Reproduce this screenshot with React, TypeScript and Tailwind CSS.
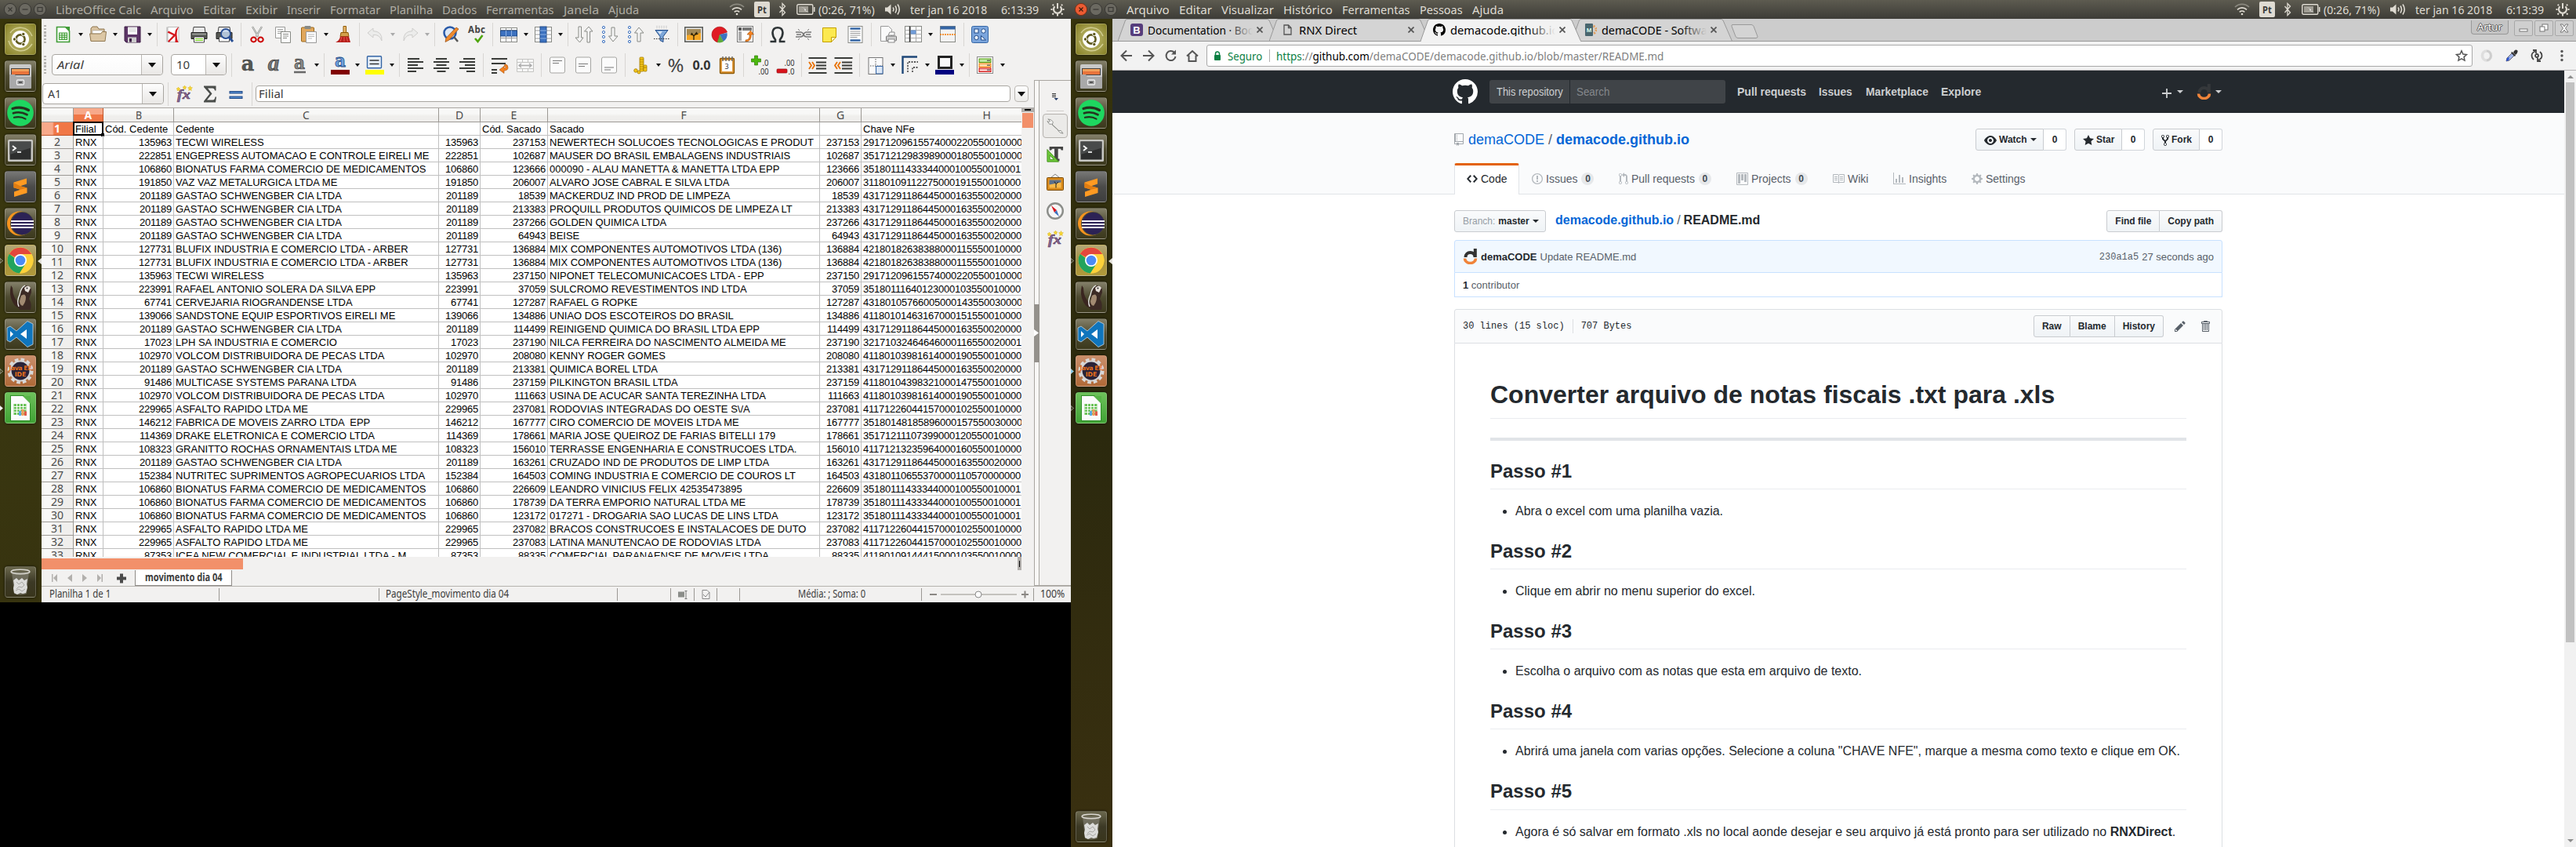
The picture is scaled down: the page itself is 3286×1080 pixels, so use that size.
import React, { useLayoutEffect, useRef } from "react";

/* Text squeezed or stretched horizontally to fill the width of its box. */
function Fit({ className, children }: { className: string; children: React.ReactNode }) {
  const outer = useRef<HTMLSpanElement>(null);
  const inner = useRef<HTMLSpanElement>(null);
  useLayoutEffect(() => {
    const o = outer.current;
    const i = inner.current;
    if (o && i && i.offsetWidth > 0) {
      i.style.transform = `scaleX(${o.clientWidth / i.offsetWidth})`;
    }
  });
  return (
    <span ref={outer} className={`flex shrink-0 items-center whitespace-nowrap ${className}`}>
      <span ref={inner} className="inline-block shrink-0 origin-left">
        {children}
      </span>
    </span>
  );
}

/* ---------- top panel ---------- */

function Indicators() {
  return (
    <div className="ml-auto flex h-6 shrink-0 items-center text-[14.5px] text-[#dfdbd2]">
      <svg className="h-5 w-5 shrink-0" viewBox="0 0 20 20" fill="none" stroke="#dfdbd2" strokeWidth="1.7">
        <path d="M1 7a13 13 0 0 1 18 0" stroke="#8b897f" />
        <path d="M4 10.3a8.6 8.6 0 0 1 12 0" />
        <path d="M6.8 13.3a4.7 4.7 0 0 1 6.4 0" />
        <circle cx="10" cy="16" r="1.3" fill="#dfdbd2" stroke="none" />
      </svg>
      <span className="ml-3 flex h-[20px] w-[20px] items-center justify-center rounded-[2px] bg-[#dfdbd2] text-[13px] font-bold text-[#3c3b37]">
        <Fit className="w-[12px]">Pt</Fit>
      </span>
      <svg className="ml-[11px] h-[18px] w-[10px]" viewBox="0 0 10 18" fill="none" stroke="#dfdbd2" strokeWidth="1.3">
        <path d="M1.5 5l7 8L5 16.5V1.500L8.500 5l-7 8" />
      </svg>
      <svg className="ml-[13px] h-[14px] w-6" viewBox="0 0 24 14" fill="none" stroke="#dfdbd2">
        <rect x="0.8" y="0.8" width="20" height="12.400" rx="1.5" strokeWidth="1.400" />
        <rect x="22" y="4" width="1.500" height="6" fill="#dfdbd2" stroke="none" />
        <rect x="3" y="3" width="12" height="8" fill="#a09d94" stroke="none" />
        <path d="M5 3l7 4-1 2 6 2-7-3 1-2z" fill="#fff" stroke="none" />
      </svg>
      <Fit className="ml-1 w-[72px]">(0:26, 71%)</Fit>
      <svg className="ml-[13px] h-[18px] w-[20px]" viewBox="0 0 20 18" fill="none" stroke="#dfdbd2" strokeWidth="1.600">
        <path d="M0 6.500h3L7.500 2.500v13L3 11.500H0z" fill="#dfdbd2" stroke="none" />
        <path d="M10 6.500q1.800 2.500 0 5M13 4.500q3 4.500 0 9M16 2.500q4.500 6.500 0 13" />
      </svg>
      <Fit className="ml-[12px] w-[98px]">ter jan 16 2018</Fit>
      <Fit className="ml-[18px] w-[48px]">6:13:39</Fit>
      <svg className="ml-[15px] mr-2 h-[18px] w-[18px]" viewBox="0 0 18 18" fill="none" stroke="#dfdbd2">
        <path d="M5.500 5.300a5 5 0 1 0 7 0" strokeWidth="2.200" />
        <path d="M9 1v7" strokeWidth="2" />
        <path d="M9 15v2.500M2.500 9H0.500M15.500 9h2M4 14l-1.500 1.500M14 14l1.500 1.500M4 4L2.700 2.700M14 4l1.300-1.300" strokeWidth="2" />
      </svg>
    </div>
  );
}

function PanelButtons({ active }: { active: boolean }) {
  const stroke = active ? "#3c1b10" : "#3a3935";
  return (
    <svg className="ml-[4px] h-[18px] w-[57px] shrink-0" viewBox="0 0 57 18">
      <circle cx="9" cy="9" r="7.600" fill={active ? "#ec5b32" : "#6b6961"} stroke={active ? "#7a3018" : "#3a3935"} />
      <circle cx="28" cy="9" r="7.600" fill="#6b6961" stroke="#3a3935" />
      <circle cx="47" cy="9" r="7.600" fill="#6b6961" stroke="#3a3935" />
      <path d="M6.500 6.500l5 5M11.500 6.500l-5 5" stroke={stroke} strokeWidth="1.200" />
      <path d="M24.500 9h7" stroke="#3a3935" strokeWidth="1.300" />
      <rect x="44" y="6.500" width="6" height="5" fill="none" stroke="#3a3935" strokeWidth="1.200" />
    </svg>
  );
}

/* ---------- launcher ---------- */

function Tile({ className, children, mark }: { className: string; children: React.ReactNode; mark?: React.ReactNode }) {
  return (
    <div className="relative flex h-[40px] w-full shrink-0 pl-[6px]">
      {mark}
      <div className={`flex h-[40px] w-[40px] items-center justify-center rounded-[4px] border border-white/20 shadow-[0_0_3px_rgba(0,0,0,0.7)] ${className}`}>
        {children}
      </div>
    </div>
  );
}

const glass = "bg-linear-to-b from-[#84806a] via-[#4d4a30] to-[#3c391d]";

function Launcher({ tall }: { tall: boolean }) {
  const mark = (y: string) => (
    <svg className="absolute left-0 top-[17px] h-[7px] w-[4px]" viewBox="0 0 4 7">
      <path d="M0 0.500L3.500 3.500 0 6.500z" fill={y} stroke="#ddd" strokeWidth="0.600" />
    </svg>
  );
  return (
    <div
      className={`flex w-[53px] shrink-0 flex-col gap-[7px] pt-[6px] pb-[6px] ${
        tall
          ? "bg-linear-to-b from-[#37340c] via-[#2b290e] to-[#3a3010]"
          : "bg-linear-to-b from-[#38350b] via-[#3a3811] to-[#37330f]"
      }`}
    >
      <Tile className="bg-radial from-[#c9c57a] to-[#857f22]">
        <svg className="h-9 w-9" viewBox="0 0 36 36">
          <path d="M3 20C6 34 24 38 33 24M33 14C28 1 12 0 5 10" fill="none" stroke="#d2ce93" strokeWidth="1.500" />
          <circle cx="18" cy="18" r="11" fill="#fff" />
          <circle cx="18" cy="18" r="5.600" fill="none" stroke="#5f5a1e" strokeWidth="2.600" />
          <g fill="#5f5a1e" stroke="#fff" strokeWidth="1">
            <circle cx="10.500" cy="18" r="2.200" />
            <circle cx="21.800" cy="11.500" r="2.200" />
            <circle cx="21.800" cy="24.500" r="2.200" />
          </g>
        </svg>
      </Tile>
      <Tile className={glass}>
        <svg className="h-9 w-9" viewBox="0 0 36 36">
          <path d="M4 5q0-2 2-2h24q2 0 2 2v28H4z" fill="#c9c9c9" />
          <rect x="6" y="8" width="24" height="9" fill="#444" />
          <rect x="7" y="9" width="22" height="3" fill="#f0a05a" />
          <rect x="7" y="12" width="22" height="4" fill="#e8743b" />
          <path d="M4 16h7l2 3h19v14q0 1-1 1H5q-1 0-1-1z" fill="#a9a9a9" />
          <rect x="13.500" y="23" width="9" height="6" rx="1" fill="#999" stroke="#eee" strokeWidth="1.300" />
          <rect x="16" y="25" width="4" height="2" fill="#555" />
        </svg>
      </Tile>
      <Tile className={glass}>
        <svg className="h-9 w-9" viewBox="0 0 36 36">
          <circle cx="18" cy="18" r="16.800" fill="#1ed760" />
          <g fill="none" stroke="#25331f" strokeLinecap="round">
            <path d="M8 12.500q11-3.500 20.500 2" strokeWidth="3.200" />
            <path d="M9 18.300q9-2.800 17.500 2" strokeWidth="2.700" />
            <path d="M10 23.800q8-2 14.500 1.800" strokeWidth="2.200" />
          </g>
        </svg>
      </Tile>
      <Tile className={glass}>
        <svg className="h-9 w-9" viewBox="0 0 36 36">
          <rect x="2" y="5" width="32" height="28" rx="1.500" fill="#c8c8c4" />
          <rect x="4.500" y="7.500" width="27" height="23" fill="#2d2e2e" />
          <path d="M4.500 7.500h27v8L4.500 24z" fill="#484a4a" />
          <path d="M8 13l4 3-4 3" fill="none" stroke="#fff" strokeWidth="1.800" />
          <path d="M14 21h5" stroke="#fff" strokeWidth="1.600" />
        </svg>
      </Tile>
      <Tile className="bg-linear-to-b from-[#787876] via-[#4b4b4a] to-[#3e3e3e]">
        <svg className="h-9 w-9" viewBox="0 0 36 36">
          <path d="M9.500 12.500L26 7.500v7l-8 2.800 8.500 2.200V26L10 31v-6.500l8-2.700-8.500-2.500z" fill="#ff9a22" />
          <path d="M9.500 13l8.500 4.300 8.500 2.200-8.500 2.300-8.500-2.500z" fill="#e07d12" />
        </svg>
      </Tile>
      <Tile className={glass}>
        <svg className="h-9 w-9" viewBox="0 0 36 36">
          <ellipse cx="17" cy="18" rx="16" ry="15.500" fill="#f7941e" />
          <ellipse cx="20" cy="18" rx="15" ry="15" fill="#4b4a3a" />
          <circle cx="20.500" cy="18" r="14" fill="#2c2255" />
          <path d="M6 14h29v2H6zM6 18h29v2H6zM6 22h29v2H6z" fill="#f4f1fb" />
        </svg>
      </Tile>
      <Tile
        className="bg-linear-to-b from-[#b3a877] via-[#a59040] to-[#b19a3a]"
        mark={
          <>
            {mark("transparent")}
            <svg className="absolute right-0 top-[17px] h-[8px] w-[5px]" viewBox="0 0 5 8">
              <path d="M5 0L0 4l5 4z" fill="#e4e2dc" />
            </svg>
          </>
        }
      >
        <svg className="h-[34px] w-[34px]" viewBox="0 0 34 34">
          <circle cx="17" cy="17" r="16.500" fill="#fdd13a" />
          <path d="M17 17L2.700 8.800A16.500 16.500 0 0 1 31.300 9H17z" fill="#e3473c" />
          <path d="M17 17l-3 0L2.700 8.800A16.500 16.500 0 0 0 16 33.500L24 21z" fill="#22a45d" />
          <path d="M31.300 9A16.500 16.500 0 0 1 16 33.500L24 21a8 8 0 0 0-7-12z" fill="#fdd13a" />
          <circle cx="17" cy="17" r="8" fill="#fff" />
          <circle cx="17" cy="17" r="6.300" fill="#4b8bf5" />
        </svg>
      </Tile>
      <Tile className={glass}>
        <svg className="h-9 w-9" viewBox="0 0 36 36">
          <path d="M6 3Q3 14 8 24q4 8 12 9l-2-6Q8 20 8 6z" fill="#3a2620" />
          <path d="M26 3q7 1 6 9l-3 8q4 6 2 14H17q-3-4 0-12Q18 5 26 3z" fill="#3c2a25" />
          <path d="M19 16q5-4 6 2 0 6-4 11-4-1-4-6z" fill="#a28a72" />
          <path d="M24 3q-5 2-7 12-4 8-1 15" fill="none" stroke="#eee" strokeWidth="1.300" />
          <path d="M23 6q5-5 8 0l-3 6-4-2z" fill="#e6e0da" />
          <circle cx="26.500" cy="6.500" r="1" fill="#222" />
        </svg>
      </Tile>
      <Tile className={glass}>
        <svg className="h-9 w-9" viewBox="0 0 36 36">
          <path d="M27 1.500l7 3.500v26l-7 3.500L13 22l-8 6-4-2V10l4-2 8 6z" fill="#0f75bd" stroke="#b9cbd6" strokeWidth="0.900" />
          <path d="M26 12v12l-8-6zM5 14v8l4-4z" fill="#fff" />
        </svg>
      </Tile>
      <Tile className="border-[#e58d55] bg-linear-to-b from-[#c98e6a] to-[#b06a38]" mark={mark(tall ? "#6fc4e8" : "transparent")}>
        <svg className="h-[38px] w-[38px] shrink-0" viewBox="0 0 38 38">
          <circle cx="19" cy="19" r="14.500" fill="none" stroke="#d9d9d9" strokeWidth="4" strokeDasharray="4.500 3.100" />
          <circle cx="19" cy="19" r="12.500" fill="#2a2338" stroke="#d4d4d4" strokeWidth="2.200" />
          <text x="19" y="17.500" textAnchor="middle" fontSize="7.800" fontWeight="bold" fontFamily="DejaVu Sans" fill="#e8701a" textLength="29">
            Java EE
          </text>
          <text x="19" y="25.500" textAnchor="middle" fontSize="7.800" fontWeight="bold" fontFamily="DejaVu Sans" fill="#e8701a">
            IDE
          </text>
        </svg>
      </Tile>
      <Tile className="border-[#7cc86b] bg-linear-to-b from-[#6dc25a] to-[#3fa234]" mark={mark(tall ? "transparent" : "#fff")}>
        <svg className="h-9 w-9" viewBox="0 0 36 36">
          <path d="M5 2h17l9 9v24H5z" fill="#2f8f28" />
          <path d="M6 3h15.500L30 11.500V34H6z" fill="#fbfbfb" />
          <path d="M21 3l10 10V3z" fill="#58b548" />
          <rect x="9.500" y="13" width="16" height="14" fill="#6dc35a" />
          <path d="M9.500 16.500h16M9.500 20h16M9.500 23.500h16M13.500 13v14M17.500 13v14M21.500 13v14" stroke="#fff" strokeWidth="1" />
          <path d="M16 22h3v6h-3z" fill="#5aa9e0" />
          <path d="M19.500 20h3v8h-3z" fill="#f29a5c" />
          <path d="M23 22.500h3V28h-3z" fill="#e0594a" />
        </svg>
      </Tile>
      <div className="mt-auto">
        <Tile className="bg-linear-to-b from-[#6b684e] via-[#3c3925] to-[#39351c]">
          <svg className="h-9 w-9" viewBox="0 0 36 36">
            <path d="M7 5l3 28q8 3 16 0l3-28z" fill="#8e8c82" opacity="0.550" />
            <ellipse cx="18" cy="5" rx="12" ry="2.700" fill="none" stroke="#d9d7d0" strokeWidth="1.500" />
            <path d="M9 16l4-3 3 3 4-3 3 3 4-2-1 7 1 4-2 7-4 1-3-1-4 2-4-2-1-6 1-4z" fill="#dcdcda" />
            <path d="M13 18l3 3 4-3 3 4-3 3-4-1-3 3M12 29l4-2 4 3 4-3" fill="none" stroke="#a7a6a2" strokeWidth="1" />
          </svg>
        </Tile>
      </div>
    </div>
  );
}

/* ---------- spreadsheet toolbar icons ---------- */

const glyphs: Record<string, React.ReactNode> = {
  new: (
    <>
      <path d="M3.500 2.500h11l5 5v14h-16z" fill="#fff" stroke="#3f9c35" strokeWidth="1.600" />
      <path d="M14 2h6v6z" fill="#3f9c35" />
      <rect x="6.500" y="10" width="10" height="8.500" fill="#dff0da" stroke="#3f9c35" />
      <path d="M6.500 13h10M6.500 15.700h10M10 10v8.500M13.300 10v8.500" stroke="#3f9c35" />
    </>
  ),
  open: (
    <>
      <path d="M3 20V4l2-2h6l2 3h7v5" fill="#d9c3a1" stroke="#8f7650" />
      <path d="M5 7h13v4H5z" fill="#fff" stroke="#aaa" strokeWidth="0.600" />
      <path d="M1.500 11h14l2-2.500h5L21 20.500H3z" fill="#dcc7a5" stroke="#927a53" />
    </>
  ),
  save: (
    <>
      <path d="M2 2h20v20H4l-2-2z" fill="#5c3566" stroke="#3c1f45" />
      <rect x="6" y="2.500" width="12" height="9.500" fill="#f7f7f7" />
      <path d="M7.500 5h9M7.500 7.500h9" stroke="#ccc" />
      <rect x="6" y="15.500" width="11" height="6.500" fill="#ccc" />
      <rect x="8" y="17" width="3" height="4.500" fill="#3c1f45" />
    </>
  ),
  pdf: (
    <>
      <path d="M5 2.500h14v19H5z" fill="#fff" stroke="#bbb" />
      <path d="M4 2.500v19" stroke="#aaa" />
      <path d="M19.500 2q-3 4-3 10t2 10h-4V14l-8 8-1.500-1.500L12 13 4.500 9.500l1.500-2 8 4Q14 5 19.500 2z" fill="#d4161c" />
    </>
  ),
  print: (
    <>
      <path d="M5 2.500h14l1 7H4z" fill="#e8e8e8" stroke="#444" />
      <path d="M2 9.500h20v8H2z" fill="#555753" stroke="#222" />
      <path d="M3 10.500h18v2H3z" fill="#9a9c98" />
      <path d="M5.500 15h13v7h-13z" fill="#fff" stroke="#444" />
      <path d="M7 17.500h10M7 19.500h10" stroke="#73d216" />
    </>
  ),
  preview: (
    <>
      <path d="M4 2.500h14l1 7H3z" fill="#e8e8e8" stroke="#444" />
      <path d="M1 9.500h20v8H1z" fill="#555753" stroke="#222" />
      <path d="M4.500 15h13v6h-13z" fill="#fff" stroke="#444" />
      <circle cx="13" cy="11" r="6" fill="#c4d7ef" fillOpacity="0.850" stroke="#2a4f94" strokeWidth="1.800" />
      <path d="M17 15.500l5 5.500" stroke="#2a4f94" strokeWidth="3" />
    </>
  ),
  cut: (
    <>
      <path d="M6 2l7.500 13M18 2l-7.500 13" stroke="#888a85" strokeWidth="2.200" />
      <path d="M6 2l7.500 13M18 2l-7.500 13" stroke="#f4f4f4" strokeWidth="0.800" />
      <ellipse cx="7.500" cy="18.500" rx="3.200" ry="3" fill="none" stroke="#cc0000" strokeWidth="2" />
      <ellipse cx="16.500" cy="18.500" rx="3.200" ry="3" fill="none" stroke="#cc0000" strokeWidth="2" />
    </>
  ),
  copy: (
    <>
      <path d="M2.500 2.500h12v14h-12z" fill="#fdfdfd" stroke="#9a9a98" />
      <path d="M5 5.500h7M5 8h7M5 10.500h7" stroke="#9a9a98" />
      <path d="M9.500 8.500h12v14h-12z" fill="#fdfdfd" stroke="#888a85" />
      <path d="M12 11.500h7M12 14h7M12 16.500h5" stroke="#888a85" />
    </>
  ),
  paste: (
    <>
      <rect x="2.500" y="3" width="16" height="18" rx="1" fill="#e0a75c" stroke="#9a6616" />
      <rect x="6.500" y="1" width="8" height="4" rx="1" fill="#888a85" />
      <path d="M8.500 8.500h13v14h-13z" fill="#fdfdfd" stroke="#999" />
      <path d="M11 12h8M11 14.500h8M11 17h5" stroke="#bbb" />
    </>
  ),
  brush: (
    <>
      <path d="M12 1.500h3.500v8H12z" fill="#e9b96e" stroke="#8f5902" />
      <path d="M9 9.500h9l1 5H8z" fill="#d3a04c" stroke="#8f5902" />
      <path d="M8 14.500h11l2 7.500H2q5-2 6-7.500z" fill="#b6201c" />
      <path d="M10 15l-2 6M13 15v6M16 15l1.500 6" stroke="#e8554d" />
    </>
  ),
  undo: <path d="M9 4L2 10l7 6v-3.500q8-1 11 7.500Q21 8 9 7.500z" fill="#ececeb" stroke="#cfcecc" />,
  redo: <path d="M15 4l7 6-7 6v-3.500Q7 11.500 4 20 3 8 15 7.500z" fill="#ececeb" stroke="#cfcecc" />,
  find: (
    <>
      <circle cx="11" cy="10" r="7.500" fill="#dce7f5" stroke="#2a5aa8" strokeWidth="2.500" />
      <path d="M16 15l5 6" stroke="#555" strokeWidth="2.500" />
      <path d="M19 3l3 2L10 19l-5 2.500 1-5z" fill="#f08a2c" stroke="#914608" strokeWidth="0.700" />
    </>
  ),
  spell: (
    <>
      <text x="12" y="10" textAnchor="middle" fontSize="11.500" fontWeight="bold" fontFamily="Noto Sans" fill="#444" textLength="22">
        Abc
      </text>
      <path d="M10 17l3.500 4 6-8" fill="none" stroke="#4ea50d" strokeWidth="2.600" />
    </>
  ),
  row: (
    <>
      <rect x="1.500" y="3.500" width="21" height="18" fill="#fff" stroke="#888a85" />
      <path d="M1.500 16.500h21M8.500 3.500v18M15.500 3.500v18M1.500 6.500h21" stroke="#999" />
      <rect x="1.500" y="7" width="21" height="7" fill="#3d72c0" stroke="#204a87" />
      <path d="M8.500 7v7M15.500 7v7" stroke="#8db1e3" />
    </>
  ),
  column: (
    <>
      <rect x="1.500" y="2.500" width="21" height="19" fill="#fff" stroke="#888a85" />
      <path d="M1.500 7h21M1.500 12h21M1.500 17h21" stroke="#999" />
      <rect x="8" y="2" width="8" height="20" fill="#3d72c0" stroke="#204a87" />
      <path d="M8 7h8M8 12h8M8 17h8" stroke="#8db1e3" />
    </>
  ),
  sort: (
    <>
      <path d="M5 2v14H1l5.500 6 4.500-6H8.500V2z" fill="#f5f5f5" stroke="#888a85" />
      <path d="M16 22V8h-3.500l5.500-6 5 6h-3.500v14z" fill="#f5f5f5" stroke="#888a85" />
    </>
  ),
  sortAsc: (
    <>
      <g fill="#fff" stroke="#3d72c0">
        <circle cx="4" cy="3" r="1.600" />
        <circle cx="4" cy="9" r="1.600" />
        <circle cx="4" cy="15" r="1.600" />
        <circle cx="4" cy="21" r="1.600" />
      </g>
      <path d="M14 3v11h-3.500l5.500 7 6-7h-4V3z" fill="#f5f5f5" stroke="#888a85" />
    </>
  ),
  sortDesc: (
    <>
      <g fill="#fff" stroke="#3d72c0">
        <circle cx="4" cy="3" r="1.600" />
        <circle cx="4" cy="9" r="1.600" />
        <circle cx="4" cy="15" r="1.600" />
        <circle cx="4" cy="21" r="1.600" />
      </g>
      <path d="M14 21V10h-3.500L16 3l6 7h-4v11z" fill="#f5f5f5" stroke="#888a85" />
    </>
  ),
  filter: (
    <>
      <path d="M6 1v4M9 1v4M12 1v4M15 1v4M18 1v4" stroke="#aaa" strokeDasharray="1 1" />
      <path d="M4 6.500h16l-6 8v7l-4-2v-5z" fill="#7da7d9" stroke="#204a87" />
      <path d="M7 8h6l-3 4z" fill="#fff" opacity="0.700" />
      <path d="M2 17.500h20" stroke="#333" strokeDasharray="1.500 1.500" />
    </>
  ),
  image: (
    <>
      <rect x="0.800" y="2.800" width="22.400" height="18.400" fill="#eee" stroke="#555753" strokeWidth="1.500" />
      <rect x="3" y="5" width="18" height="14" fill="#f5a623" />
      <path d="M3 5h18v5L3 13z" fill="#a38957" />
      <path d="M12 19v-5l-3-4M12 14l4-5M13.500 12l4-1M11 12l-3 0" stroke="#2e2208" strokeWidth="1.300" fill="none" />
    </>
  ),
  chart: (
    <>
      <path d="M12 12L10 22A10 10 0 1 1 21.500 9z" fill="#e01b24" stroke="#a40000" strokeWidth="0.600" />
      <path d="M12 12l9.500-2a10 10 0 0 1-5 11z" fill="#3d72c0" />
      <path d="M12 12l5 9a10 10 0 0 1-8 1z" fill="#5faa3c" />
    </>
  ),
  pivot: (
    <>
      <rect x="1.500" y="1.500" width="20" height="20" fill="#fff" stroke="#777" />
      <rect x="3" y="3" width="4" height="4" fill="#555" />
      <rect x="8" y="3" width="12" height="4" fill="#777" />
      <rect x="3" y="8" width="4" height="12" fill="#aaa" />
      <path d="M12 19q6 0 5-7h-3l4.500-5 4 5h-3q0 9-7.500 9z" fill="#f58220" stroke="#a0520f" strokeWidth="0.600" />
    </>
  ),
  omega: (
    <path
      d="M2.500 21h6.500v-2.500Q5.500 14.500 5.500 9.500 6 3.300 12 3.300t6.500 6.200q0 5-3.500 9V21h6.500"
      fill="none"
      stroke="#2e3436"
      strokeWidth="2.600"
    />
  ),
  link: (
    <g fill="none" stroke="#777" strokeWidth="1.600">
      <path d="M2 9h6q3 0 4 3 1 3 4 3h6M2 15h6q3 0 4-3 1-3 4-3h6" />
      <path d="M3 12h6M15 12h6" />
      <path d="M5 5l2 2M19 5l-2 2M5 19l2-2M19 19l-2-2" strokeWidth="1" />
    </g>
  ),
  note: (
    <>
      <path d="M3.500 3.500h17v12l-6 6h-11z" fill="#fce94f" stroke="#c4a000" />
      <path d="M20.500 15.500h-6v6z" fill="#fff8b8" stroke="#c4a000" />
    </>
  ),
  header: (
    <>
      <rect x="3" y="1.500" width="18" height="21" fill="#fff" stroke="#888a85" />
      <path d="M5.500 4.500h13M5.500 19.500h13" stroke="#3465a4" strokeWidth="2.400" />
      <path d="M5.500 8h13M5.500 10.500h13M5.500 13h13M5.500 15.500h9" stroke="#999" />
    </>
  ),
  printRange: (
    <>
      <path d="M3.500 1.500h10l4 4v15h-14z" fill="#fafafa" stroke="#999" />
      <path d="M13 13h8v-4h-6z" fill="#fff" stroke="#888" />
      <rect x="10.500" y="14" width="13" height="6" rx="1" fill="#ccc" stroke="#777" />
      <rect x="13" y="18" width="8" height="4" fill="#fff" stroke="#888" />
    </>
  ),
  freeze: (
    <>
      <rect x="1.500" y="1.500" width="21" height="20" fill="#fff" stroke="#888a85" />
      <path d="M1.500 6.500h21M1.500 11.500h21M1.500 16.500h21M8.500 1.500v20M15.500 1.500v20" stroke="#aaa" />
      <rect x="8.500" y="6.500" width="7" height="5" fill="#6f9bd8" />
      <path d="M7.500 1.500v20" stroke="#333" strokeWidth="1.500" />
    </>
  ),
  split: (
    <>
      <rect x="2.500" y="1.500" width="19" height="20" fill="#f2f2f2" stroke="#888a85" />
      <rect x="2.500" y="1.500" width="19" height="4" fill="#3465a4" />
      <path d="M2 12h20" stroke="#f57900" strokeWidth="1.500" strokeDasharray="2 1" />
    </>
  ),
  shapes: (
    <>
      <rect x="1.500" y="1.500" width="21" height="21" rx="2" fill="#7ba5dc" stroke="#3465a4" />
      <g fill="#eaf2fc" stroke="#204a87">
        <rect x="5" y="5" width="5" height="5" />
        <circle cx="16.500" cy="7.500" r="2.700" />
        <circle cx="7.500" cy="16" r="2.700" />
        <path d="M13.500 13.500v5.500h6z" />
      </g>
    </>
  ),
  bold: (
    <text x="12" y="19" textAnchor="middle" fontSize="25.500" fontWeight="bold" fontFamily="DejaVu Serif" fill="#555753" stroke="#333" strokeWidth="0.400">
      a
    </text>
  ),
  italic: (
    <text x="12" y="19" textAnchor="middle" fontSize="29" fontStyle="italic" fontWeight="bold" fontFamily="Liberation Serif" fill="#777" stroke="#333" strokeWidth="0.700">
      a
    </text>
  ),
  underline: (
    <>
      <text x="12" y="17" textAnchor="middle" fontSize="24" fontWeight="bold" fontFamily="DejaVu Serif" fill="#888" stroke="#333" strokeWidth="0.700" textLength="14" lengthAdjust="spacingAndGlyphs">
        a
      </text>
      <path d="M5 21h15" stroke="#333" strokeWidth="2.400" />
      <path d="M5 21h15" stroke="#bbb" strokeWidth="0.800" />
    </>
  ),
  fontColor: (
    <>
      <text x="12" y="14" textAnchor="middle" fontSize="23" fontWeight="bold" fontFamily="DejaVu Serif" fill="#6fa0dc" stroke="#204a87" strokeWidth="0.800" textLength="14" lengthAdjust="spacingAndGlyphs">
        a
      </text>
      <rect x="0" y="18" width="24" height="6" fill="#800000" />
    </>
  ),
  highlight: (
    <>
      <rect x="2.500" y="0.800" width="18" height="15" rx="1" fill="#e9f1fb" stroke="#3465a4" strokeWidth="1.400" />
      <path d="M5.500 6h12M5.500 10.500h12" stroke="#333" strokeWidth="1.600" />
      <rect x="0" y="18" width="24" height="6" fill="#ffff00" />
    </>
  ),
  left: <path d="M2 4h15M2 8h20M2 12h13M2 16h20M2 20h11" stroke="#3a3c39" strokeWidth="1.900" />,
  center: <path d="M5 4h14M2 8h20M5.500 12h13M2 16h20M6.500 20h11" stroke="#3a3c39" strokeWidth="1.900" />,
  right: <path d="M7 4h15M2 8h20M9 12h13M2 16h20M11 20h11" stroke="#3a3c39" strokeWidth="1.900" />,
  wrap: (
    <>
      <path d="M2 4h20M2 10h18M2 18h7M2 22h7" stroke="#3a3c39" strokeWidth="1.900" />
      <path d="M19 11q4 0 4 4t-5 4v3.500L12 18l6-4.500V16q2 0 2-1.500t-2-1z" fill="#f58220" stroke="#a8510c" strokeWidth="0.600" />
    </>
  ),
  merge: (
    <>
      <path d="M1.500 4.500h21v16h-21zM1.500 8.500h21M1.500 16.500h21M8.500 4.500v4M15.500 4.500v4M8.500 16.500v4M15.500 16.500v4" fill="#f7f7f7" stroke="#c4c4c2" />
      <path d="M4 12.500h16M7 10l-3 2.500 3 2.500M17 10l3 2.500-3 2.500" fill="none" stroke="#aaa" strokeWidth="1.300" />
    </>
  ),
  top: (
    <>
      <rect x="2.500" y="2" width="19" height="20" rx="2" fill="#fbfbfb" stroke="#a5a5a2" />
      <path d="M6 6.500h12M6 9.500h8" stroke="#777" />
    </>
  ),
  middle: (
    <>
      <rect x="2.500" y="2" width="19" height="20" rx="2" fill="#fbfbfb" stroke="#a5a5a2" />
      <path d="M6 10.500h12M6 13.500h8" stroke="#777" />
    </>
  ),
  bottom: (
    <>
      <rect x="2.500" y="2" width="19" height="20" rx="2" fill="#fbfbfb" stroke="#a5a5a2" />
      <path d="M6 15h12M6 18h8" stroke="#777" />
    </>
  ),
  currency: (
    <g fill="#f5c71a" stroke="#a37c00" strokeWidth="0.800">
      <rect x="10" y="2" width="5" height="18" rx="1" />
      <rect x="15" y="12" width="4" height="8" rx="1" />
      <circle cx="5" cy="19" r="2.300" />
      <circle cx="9" cy="21" r="2" />
      <path d="M10 5h5M10 8h5M10 11h5M10 14h5M10 17h5M15 15h4" />
    </g>
  ),
  percent: (
    <text x="12" y="21" textAnchor="middle" fontSize="24" fontFamily="Noto Sans" fill="#444" textLength="21" lengthAdjust="spacingAndGlyphs">
      %
    </text>
  ),
  decimal: (
    <text x="12" y="18" textAnchor="middle" fontSize="16" fontWeight="bold" fontFamily="Noto Sans" fill="#333" textLength="23" lengthAdjust="spacingAndGlyphs">
      0.0
    </text>
  ),
  date: (
    <>
      <rect x="2.500" y="3.500" width="18" height="19" rx="1" fill="#e09a3e" stroke="#8f5902" strokeWidth="1.300" />
      <rect x="5" y="6" width="13" height="14" fill="#fff" />
      <path d="M6 1v6M10 1v6M14 1v6M18 1v6" stroke="#666" strokeWidth="1.400" />
      <text x="11" y="17" textAnchor="middle" fontSize="9" fontFamily="Noto Sans" fill="#333">
        3
      </text>
    </>
  ),
  addDecimal: (
    <>
      <path d="M5.500 0h4v4h4v4h-4v4h-4V8h-4V4h4z" fill="#4bb80e" stroke="#2f7d05" strokeWidth="0.700" />
      <text x="15.500" y="13" fontSize="10.500" fontFamily="Noto Sans" fill="#333" textLength="8" lengthAdjust="spacingAndGlyphs">
        .0
      </text>
      <text x="10.500" y="24" fontSize="10.500" fontFamily="Noto Sans" fill="#333" textLength="13" lengthAdjust="spacingAndGlyphs">
        .00
      </text>
    </>
  ),
  delDecimal: (
    <>
      <rect x="1" y="17" width="13" height="5" rx="1" fill="#d9141c" stroke="#8f0d12" strokeWidth="0.700" />
      <text x="15.500" y="24" fontSize="10.500" fontFamily="Noto Sans" fill="#333" textLength="8" lengthAdjust="spacingAndGlyphs">
        .0
      </text>
      <text x="10.500" y="13" fontSize="10.500" fontFamily="Noto Sans" fill="#333" textLength="13" lengthAdjust="spacingAndGlyphs">
        .00
      </text>
    </>
  ),
  indent: (
    <>
      <path d="M0.500 3h23M10 8.500h13M10 12.500h13M10 16.500h13M0.500 22h23" stroke="#3a3c39" strokeWidth="1.900" />
      <path d="M1 8l3 4.500L1 17M5 8l3 4.500L5 17" fill="none" stroke="#e8740c" strokeWidth="1.900" />
    </>
  ),
  outdent: (
    <>
      <path d="M0.500 3h23M10 8.500h13M10 12.500h13M10 16.500h13M0.500 22h23" stroke="#3a3c39" strokeWidth="1.900" />
      <path d="M4 8l-3 4.500L4 17M8 8l-3 4.500L8 17" fill="none" stroke="#e8740c" strokeWidth="1.900" />
    </>
  ),
  borders: (
    <>
      <rect x="3" y="2.500" width="18" height="21" fill="#fbfbfb" stroke="#777" />
      <path d="M12 4v10M5 13h16" stroke="#555" strokeDasharray="1.500 1.500" />
      <path d="M12.500 13.500h8.500v9.500h-8.500z" fill="#dde8f6" stroke="#3465a4" />
    </>
  ),
  borderStyle: (
    <>
      <path d="M2.500 23V1.500H21" fill="none" stroke="#1f4777" strokeWidth="2.400" />
      <path d="M9 21V8h13M15 21v-6h7" fill="none" stroke="#222" strokeWidth="1.300" strokeDasharray="2 1.500" />
    </>
  ),
  borderColor: (
    <>
      <rect x="4.500" y="1.500" width="16" height="14" fill="#f8f8f8" stroke="#222" strokeWidth="3" />
      <rect x="0" y="18" width="24" height="6" fill="#000080" />
    </>
  ),
  conditional: (
    <>
      <rect x="1.500" y="1.500" width="20" height="21" fill="#fff" stroke="#888" />
      <rect x="4" y="4" width="15" height="4.500" fill="#bfe8a3" stroke="#4e9a06" />
      <rect x="4" y="10" width="15" height="4.500" fill="#fcd9a8" stroke="#f57900" />
      <rect x="4" y="16" width="15" height="4.500" fill="#f9b9b9" stroke="#cc0000" />
      <path d="M14 6.200h4M14 12.200h4M14 18.200h4" stroke="#333" />
    </>
  ),
  fx: (
    <>
      <text x="11.500" y="17.500" textAnchor="middle" fontSize="17" fontStyle="italic" fontWeight="bold" fontFamily="Liberation Serif" fill="#8b6a91" stroke="#4b2a55" strokeWidth="0.500" textLength="17" lengthAdjust="spacingAndGlyphs">
        fx
      </text>
      <path
        d="M4.500 3l.8 1.600 1.700.4-1.300 1.200.3 1.800-1.500-.9-1.500.9.3-1.800L2 5l1.700-.4zM12.500 1l.8 1.600 1.700.4-1.300 1.200.3 1.800-1.500-.9-1.500.9.3-1.800L10 3l1.700-.4zM19.500 1.500l.9 1.900 2.100.4-1.600 1.500.4 2.200-1.800-1-1.800 1 .4-2.200-1.600-1.500 2.100-.4z"
        fill="#f7d633"
        stroke="#d5a800"
        strokeWidth="0.400"
      />
    </>
  ),
  sum: <path d="M4 1.500h15.500v6H18q-.5-3-3-3H9l5.500 7L8 19.500h7.500q2.500 0 3-4H20l-1 7H4v-1.500l7.500-9.500L4 3z" fill="#4a4d4a" />,
  equals: (
    <>
      <rect x="4" y="8.500" width="16" height="2.500" fill="#5288cc" stroke="#204a87" />
      <rect x="4" y="15" width="16" height="2.500" fill="#5288cc" stroke="#204a87" />
    </>
  ),
};

function Glyph({ name }: { name: string }) {
  return (
    <span className="flex w-[33px] shrink-0 justify-center">
      <svg className="h-6 w-6 overflow-visible" viewBox="0 0 24 24" fill="none">
        {glyphs[name]}
      </svg>
    </span>
  );
}

function Drop({ dim }: { dim?: boolean }) {
  return (
    <span className="flex w-[11px] shrink-0 justify-center">
      <svg className="h-[4px] w-[6px]" viewBox="0 0 6 4">
        <path d="M0 0h6L3 4z" fill={dim ? "#aaa" : "#111"} />
      </svg>
    </span>
  );
}

function Sep() {
  return (
    <span className="flex w-[8px] shrink-0 justify-center">
      <span className="h-[30px] w-px bg-[#d8d6d3]" />
    </span>
  );
}

function Tools({ items }: { items: string[] }) {
  return (
    <>
      {items.map((item, i) =>
        item === "v" ? <Drop key={i} /> : item === "w" ? <Drop key={i} dim /> : item === "|" ? <Sep key={i} /> : <Glyph key={i} name={item} />,
      )}
    </>
  );
}

function Handle() {
  return (
    <span className="ml-[3px] flex h-[24px] w-[3px] shrink-0 flex-col justify-between">
      {[0, 1, 2, 3, 4, 5].map((i) => (
        <span key={i} className="h-[2.500px] w-[3px] bg-[#b5b3b0]" />
      ))}
    </span>
  );
}

function BigArrow() {
  return (
    <svg className="h-[6px] w-[10px]" viewBox="0 0 10 6">
      <path d="M0 0h10L5 6z" fill="#111" />
    </svg>
  );
}

/* ---------- spreadsheet data ---------- */

const K = {
  newer: "29171209615574000220550010000",
  bion: "35180111433344000100550010001",
  gast: "43171291186445000163550020000",
  blu: "42180182638388000115550010000",
  vol: "41180103981614000190550010000",
  asf: "41171226044157000102550010000",
};

const GAST = "GASTAO SCHWENGBER CIA LTDA";
const BION = "BIONATUS FARMA COMERCIO DE MEDICAMENTOS";

const rows: string[][] = [
  ["135963", "TECWI WIRELESS", "237153", "NEWERTECH SOLUCOES TECNOLOGICAS E PRODUT", K.newer],
  ["222851", "ENGEPRESS AUTOMACAO E CONTROLE EIRELI ME", "102687", "MAUSER DO BRASIL EMBALAGENS INDUSTRIAIS", "35171212983989000180550010000"],
  ["106860", BION, "123666", "000090 - ALAU MANETTA & MANETTA LTDA EPP", K.bion],
  ["191850", "VAZ VAZ METALURGICA LTDA ME", "206007", "ALVARO JOSE CABRAL E SILVA LTDA", "31180109112275000191550010000"],
  ["201189", GAST, "18539", "MACKERDUZ IND PROD DE LIMPEZA", K.gast],
  ["201189", GAST, "213383", "PROQUILL PRODUTOS QUIMICOS DE LIMPEZA LT", K.gast],
  ["201189", GAST, "237266", "GOLDEN QUIMICA LTDA", K.gast],
  ["201189", GAST, "64943", "BEISE", K.gast],
  ["127731", "BLUFIX INDUSTRIA E COMERCIO LTDA - ARBER", "136884", "MIX COMPONENTES AUTOMOTIVOS LTDA (136)", K.blu],
  ["127731", "BLUFIX INDUSTRIA E COMERCIO LTDA - ARBER", "136884", "MIX COMPONENTES AUTOMOTIVOS LTDA (136)", K.blu],
  ["135963", "TECWI WIRELESS", "237150", "NIPONET TELECOMUNICACOES LTDA - EPP", K.newer],
  ["223991", "RAFAEL ANTONIO SOLERA DA SILVA EPP", "37059", "SULCROMO REVESTIMENTOS IND LTDA", "35180111640123000103550010000"],
  ["67741", "CERVEJARIA RIOGRANDENSE LTDA", "127287", "RAFAEL G ROPKE", "43180105766005000143550030000"],
  ["139066", "SANDSTONE EQUIP ESPORTIVOS EIRELI ME", "134886", "UNIAO DOS ESCOTEIROS DO BRASIL", "41180101463167000151550010000"],
  ["201189", GAST, "114499", "REINIGEND QUIMICA DO BRASIL LTDA EPP", K.gast],
  ["17023", "LPH SA INDUSTRIA E COMERCIO", "237190", "NILCA FERREIRA DO NASCIMENTO ALMEIDA ME", "32171032464646000116550020001"],
  ["102970", "VOLCOM DISTRIBUIDORA DE PECAS LTDA", "208080", "KENNY ROGER GOMES", K.vol],
  ["201189", GAST, "213381", "QUIMICA BOREL LTDA", K.gast],
  ["91486", "MULTICASE SYSTEMS PARANA LTDA", "237159", "PILKINGTON BRASIL LTDA", "41180104398321000147550010000"],
  ["102970", "VOLCOM DISTRIBUIDORA DE PECAS LTDA", "111663", "USINA DE ACUCAR SANTA TEREZINHA LTDA", K.vol],
  ["229965", "ASFALTO RAPIDO LTDA ME", "237081", "RODOVIAS INTEGRADAS DO OESTE S\\/A", K.asf],
  ["146212", "FABRICA DE MOVEIS ZARRO LTDA  EPP", "167777", "CIRO COMERCIO DE MOVEIS LTDA ME", "35180148185896000157550030000"],
  ["114369", "DRAKE ELETRONICA E COMERCIO LTDA", "178661", "MARIA JOSE QUEIROZ DE FARIAS BITELLI 179", "35171211107399000120550010000"],
  ["108323", "GRANITTO ROCHAS ORNAMENTAIS LTDA ME", "156010", "TERRASSE ENGENHARIA E CONSTRUCOES LTDA.", "41171213235964000160550010000"],
  ["201189", GAST, "163261", "CRUZADO IND DE PRODUTOS DE LIMP LTDA", K.gast],
  ["152384", "NUTRITEC SUPRIMENTOS AGROPECUARIOS LTDA", "164503", "COMING INDUSTRIA E COMERCIO DE COUROS LT", "43180110655370000110570000000"],
  ["106860", BION, "226609", "LEANDRO VINICIUS FELIX 42535473895", K.bion],
  ["106860", BION, "178739", "DA TERRA EMPORIO NATURAL LTDA ME", K.bion],
  ["106860", BION, "123172", "017271 - DROGARIA SAO LUCAS DE LINS LTDA", K.bion],
  ["229965", "ASFALTO RAPIDO LTDA ME", "237082", "BRACOS CONSTRUCOES E INSTALACOES DE DUTO", K.asf],
  ["229965", "ASFALTO RAPIDO LTDA ME", "237083", "LATINA MANUTENCAO DE RODOVIAS LTDA", K.asf],
  ["87353", "ICEA NEW COMERCIAL E INDUSTRIAL LTDA - M", "88335", "COMERCIAL PARANAENSE DE MOVEIS LTDA", "41180109144415000103550010000"],
];

const cell = "flex h-full shrink-0 items-center whitespace-pre border-r border-b border-[#c0c0c0]";
const num = "justify-end pr-[2px] tracking-[-0.230px]";

function SheetRow({ n, v }: { n: number; v: string[] }) {
  const head = n === 1;
  return (
    <div className="flex h-[17px] shrink-0">
      <div
        className={`flex w-[41px] shrink-0 items-center justify-center border-r border-b font-['Noto_Sans'] text-[14px] ${
          head
            ? "border-[#c0552b] bg-linear-to-r from-[#f7a98a] from-35% to-[#f07746] to-40% font-bold text-white"
            : "border-[#9c9994] bg-linear-to-r from-[#f8f8f7] from-35% to-[#f0efed] to-50% text-[#4c4c4c]"
        }`}
      >
        <Fit className={n > 9 ? "w-[16px]" : "w-[8px]"}>{n}</Fit>
      </div>
      <div className={`${cell} relative w-[38px] pl-[2px]`}>
        {head ? "Filial" : "RNX"}
        {head && (
          <>
            <span className="absolute -top-px -left-px h-[18px] w-[39px] border-2 border-black" />
            <span className="absolute -right-[2px] -bottom-[2px] h-[4px] w-[4px] bg-black" />
          </>
        )}
      </div>
      <div className={`${cell} w-[90px] ${head ? "pl-[2px]" : num}`}>{head ? "Cód. Cedente" : v[0]}</div>
      <div className={`${cell} w-[338px] pl-[2px]`}>{head ? "Cedente" : v[1]}</div>
      <div className={`${cell} w-[53px] ${num}`}>{head ? "" : v[0]}</div>
      <div className={`${cell} w-[86px] ${head ? "pl-[2px]" : num}`}>{head ? "Cód. Sacado" : v[2]}</div>
      <div className={`${cell} w-[347px] pl-[2px]`}>{head ? "Sacado" : v[3]}</div>
      <div className={`${cell} w-[53px] ${num}`}>{head ? "" : v[2]}</div>
      <div className={`${cell} w-[204px] overflow-hidden border-r-0 pl-[2px] ${head ? "" : "tracking-[-0.230px]"}`}>{head ? "Chave NFe" : v[4]}</div>
    </div>
  );
}

const colHead =
  "flex shrink-0 items-center justify-center border-r border-b border-[#9c9994] bg-linear-to-b from-[#f8f8f7] from-40% to-[#efeeec] to-60%";

function Calc() {
  return (
    <div className="flex min-w-0 flex-1 flex-col bg-[#f2f1f0] font-['Noto_Sans'] text-[#3c3c3c]">
      <div className="flex h-[39px] shrink-0 items-center">
        <Handle />
        <span className="w-[5px] shrink-0" />
        <Tools
          items={[
            "new", "v", "open", "v", "save", "v", "|", "pdf", "print", "preview", "|", "cut", "copy", "paste", "v", "brush", "|",
            "undo", "w", "redo", "w", "|", "find", "spell", "|", "row", "v", "column", "v", "|", "sort", "sortAsc", "sortDesc", "filter", "|",
            "image", "chart", "pivot", "|", "omega", "link", "note", "header", "|", "printRange", "freeze", "v", "split", "|", "shapes",
          ]}
        />
      </div>
      <div className="flex h-[39px] shrink-0 items-center text-[15px]">
        <Handle />
        <div className="ml-[7px] flex h-[27px] w-[142px] shrink-0 rounded-[4px] border border-[#a9a6a1] bg-linear-to-b from-white to-[#fafafa]">
          <span className="flex flex-1 items-center pl-[6px] italic">
            <Fit className="w-[34px]">Arial</Fit>
          </span>
          <span className="flex w-[27px] items-center justify-center rounded-r-[4px] border-l border-[#bbb8b4] bg-linear-to-b from-[#fdfdfd] to-[#e9e7e5]">
            <BigArrow />
          </span>
        </div>
        <div className="ml-[10px] flex h-[27px] w-[71px] shrink-0 rounded-[4px] border border-[#a9a6a1] bg-white">
          <span className="flex flex-1 items-center pl-[6px]">
            <Fit className="w-[17px]">10</Fit>
          </span>
          <span className="flex w-[26px] items-center justify-center rounded-r-[4px] border-l border-[#bbb8b4] bg-linear-to-b from-[#fdfdfd] to-[#e9e7e5]">
            <BigArrow />
          </span>
        </div>
        <span className="w-[2px] shrink-0" />
        <Tools
          items={[
            "|", "bold", "italic", "underline", "v", "|", "fontColor", "v", "highlight", "v", "|", "left", "center", "right", "|", "wrap", "merge", "|",
            "top", "middle", "bottom", "|", "currency", "v", "percent", "decimal", "date", "|", "addDecimal", "delDecimal", "|", "indent", "outdent", "|",
            "borders", "v", "borderStyle", "v", "borderColor", "v", "|", "conditional", "v",
          ]}
        />
      </div>
      <div className="flex min-h-0 flex-1">
        <div className="flex w-[1266px] shrink-0 flex-col">
          <div className="flex h-[35px] shrink-0 items-center text-[15px]">
            <div className="ml-px flex h-[27px] w-[155px] shrink-0 rounded-[4px] border border-[#a9a6a1] bg-white">
              <span className="flex flex-1 items-center pl-[6px]">
                <Fit className="w-[17px]">A1</Fit>
              </span>
              <span className="flex w-[27px] items-center justify-center rounded-r-[4px] border-l border-[#bbb8b4] bg-linear-to-b from-[#fdfdfd] to-[#e9e7e5]">
                <BigArrow />
              </span>
            </div>
            <span className="w-[1px] shrink-0" />
            <Tools items={["|", "fx", "sum", "equals", "|"]} />
            <div className="ml-px flex h-[21px] flex-1 items-center rounded-[4px] border border-[#a9a6a1] bg-white pl-[3px]">
              <Fit className="w-[32px]">Filial</Fit>
            </div>
            <div className="mr-[7px] ml-[5px] flex h-[21px] w-[18px] items-center justify-center rounded-[4px] border border-[#bbb8b4] bg-linear-to-b from-white to-[#ecebe9]">
              <BigArrow />
            </div>
          </div>
          <div className="flex h-[573px] shrink-0">
            <div className="flex w-[1250px] shrink-0 flex-col overflow-hidden bg-white font-['Liberation_Sans'] text-[13px] text-black">
              <div className="flex h-[19px] shrink-0 border-t border-[#aaa7a3] font-['Noto_Sans'] text-[14px] text-[#4c4c4c]">
                <div className={`${colHead} w-[41px]`} />
                <div className="flex w-[38px] shrink-0 items-center justify-center border-r border-b border-[#c0552b] bg-linear-to-b from-[#f7a98a] from-45% to-[#f07746] to-50% font-bold text-white">
                  <Fit className="w-[10px]">A</Fit>
                </div>
                <div className={`${colHead} w-[90px]`}><Fit className="w-[8px]">B</Fit></div>
                <div className={`${colHead} w-[338px]`}><Fit className="w-[9px]">C</Fit></div>
                <div className={`${colHead} w-[53px]`}><Fit className="w-[10px]">D</Fit></div>
                <div className={`${colHead} w-[86px]`}><Fit className="w-[8px]">E</Fit></div>
                <div className={`${colHead} w-[347px]`}><Fit className="w-[7px]">F</Fit></div>
                <div className={`${colHead} w-[53px]`}><Fit className="w-[10px]">G</Fit></div>
                <div className={`${colHead} w-[320px]`}><Fit className="w-[10px]">H</Fit></div>
              </div>
              <SheetRow n={1} v={[]} />
              {rows.map((r, i) => (
                <SheetRow key={i} n={i + 2} v={r} />
              ))}
            </div>
            <div className="flex w-[16px] flex-col">
              <span className="flex h-[6px] items-center justify-center bg-[#b1aeab]">
                <span className="h-[2px] w-[8px] bg-black" />
              </span>
              <span className="mx-px mt-px h-[19px] bg-[#f2906a]" />
            </div>
          </div>
          <div className="flex h-[17px] shrink-0">
            <span className="mt-[2px] h-[14px] w-[257px] bg-[#f2906a]" />
            <span className="ml-[988px] flex w-[5px] items-center justify-center bg-[#b1aeab]">
              <span className="h-[8px] w-[1.500px] bg-black" />
            </span>
          </div>
          <div className="flex h-[20px] shrink-0 text-[13.500px] font-bold">
            <svg className="ml-[12px] h-[20px] w-[70px]" viewBox="0 0 70 20" fill="#b2b0ad">
              <path d="M1 5h1.500v10H1zM8 5v10L3 10zM27 5v10l-6-5zM40 5v10l6-5zM59 5v10l5-5zM64.500 5H66v10h-1.500z" />
            </svg>
            <svg className="ml-[13px] h-[20px] w-[14px]" viewBox="0 0 14 20">
              <path d="M5 4.500h4v4h4v4H9v4H5v-4H1v-4h4z" fill="#4b4b4b" />
            </svg>
            <div className="ml-[10px] flex w-[124px] items-center justify-center border-r border-b border-l border-[#8f8c88] bg-white">
              <Fit className="w-[99px]">movimento dia 04</Fit>
            </div>
          </div>
        </div>
        <div className="flex w-[7px] shrink-0 flex-col border-x border-t border-b border-[#a9a6a1] bg-[#f8f7f6]">
          <div className="relative mt-[285px] -ml-px h-[74px] w-[7px] bg-[#94918c]">
            <svg className="absolute top-[32px] left-0 h-[9px] w-[6px]" viewBox="0 0 6 9">
              <path d="M0 0l6 4.500L0 9z" fill="#fff" />
            </svg>
          </div>
        </div>
        <div className="flex flex-1 flex-col items-center border-t border-b border-[#a9a6a1]">
          <svg className="mt-[16px] h-[9px] w-[8px]" viewBox="0 0 8 9">
            <path d="M0 0.500h5M0 2.500h5M0 4.500h5" stroke="#333" />
            <path d="M2.500 6H8L5.300 9z" fill="#223a66" />
          </svg>
          <span className="mt-[13px] h-px w-[22px] bg-[#d0cecb]" />
          <div className="mt-[3px] flex h-[31px] w-[32px] items-center justify-center rounded-[4px] border border-[#b5b2ae] bg-[#ebeae8]">
            <svg className="h-[22px] w-[22px]" viewBox="0 0 24 24">
              <path d="M2 2l4 1 3 3-1 4 9 8 3 0 3 4-4-1-3-3 0-1-9-8-3 0-3-4 2 1 2-1z" fill="#f5f5f5" stroke="#888a85" />
            </svg>
          </div>
          <svg className="mt-[9px] h-6 w-[22px]" viewBox="0 0 24 24">
            <path d="M4 1h19v5h-2.500l-1-2H16v14h2v3H9v-3h2V4H8L6.500 6H4z" fill="#444" />
            <path d="M1 5v17h16z" fill="#6fc93c" stroke="#3f8f17" />
            <path d="M4.500 13v6h6z" fill="#f2f1f0" stroke="#3f8f17" />
          </svg>
          <svg className="mt-[11px] h-6 w-6" viewBox="0 0 24 24">
            <path d="M6 7l6-5 6 5" fill="none" stroke="#888" />
            <rect x="1.500" y="6.500" width="21" height="16" rx="1" fill="#d98a1c" stroke="#7c4a05" />
            <rect x="4.500" y="9.500" width="15" height="10" fill="#f9b949" />
            <path d="M4.500 9.500h15v3l-15 3z" fill="#5c6f8a" />
            <path d="M13 19.500v-5l-2-3M13 15l3-3" stroke="#222" fill="none" />
          </svg>
          <svg className="mt-[13px] h-6 w-6" viewBox="0 0 24 24">
            <circle cx="12" cy="12" r="9.800" fill="#f6f6f6" stroke="#8b8d89" strokeWidth="2.400" />
            <path d="M7 5l7 6-3 3z" fill="#d9141c" />
            <path d="M17 19l-3-8-3 3z" fill="#3d72c0" />
          </svg>
          <svg className="mt-[12px] h-6 w-6" viewBox="0 0 24 24">
            {glyphs.fx}
          </svg>
        </div>
      </div>
      <div className="flex h-[21px] shrink-0 items-center border-t border-[#b5b2ae] text-[13.500px]">
        <Fit className="ml-[10px] w-[78px]">Planilha 1 de 1</Fit>
        <span className="ml-[138px] h-[16px] w-px bg-[#9b9894]" />
        <span className="ml-[203px] h-[16px] w-px bg-[#9b9894]" />
        <Fit className="ml-[8px] w-[157px]">PageStyle_movimento dia 04</Fit>
        <span className="ml-[138px] h-[16px] w-px bg-[#9b9894]" />
        <span className="ml-[67px] h-[16px] w-px bg-[#9b9894]" />
        <svg className="ml-[9px] h-[11px] w-[12px]" viewBox="0 0 12 11">
          <path d="M0 1.500h8v7H0z" fill="#8b8d89" />
          <path d="M10 0.500v10M8.500 0.500h3M8.500 10.500h3" stroke="#777" />
        </svg>
        <span className="ml-[8px] h-[16px] w-px bg-[#9b9894]" />
        <svg className="ml-[9px] h-[12px] w-[11px]" viewBox="0 0 11 12">
          <path d="M1 0.500h6l3 3v8H1z" fill="none" stroke="#888" />
          <path d="M2 6l3 3 5-6" stroke="#888" fill="none" />
        </svg>
        <span className="ml-[8px] h-[16px] w-px bg-[#9b9894]" />
        <span className="ml-[28px] h-[16px] w-px bg-[#9b9894]" />
        <Fit className="ml-[74px] w-[86px]">Média: ; Soma: 0</Fit>
        <span className="ml-[71px] h-[16px] w-px bg-[#9b9894]" />
        <svg className="ml-[9px] h-[12px] w-[127px]" viewBox="0 0 127 12">
          <path d="M1 6h9M118 6h9M122.500 1.500v9" stroke="#8b8884" strokeWidth="2" />
          <path d="M15 6h97" stroke="#b5b2ae" strokeWidth="1.500" />
          <circle cx="63" cy="6" r="4" fill="#fff" stroke="#888" />
        </svg>
        <span className="ml-[6px] h-[16px] w-px bg-[#9b9894]" />
        <Fit className="ml-[8px] w-[31px]">100%</Fit>
      </div>
    </div>
  );
}

/* ---------- browser ---------- */

function BrowserTab({ active, icon, children, fade }: { active?: boolean; icon: React.ReactNode; children: React.ReactNode; fade?: boolean }) {
  return (
    <div className={`relative -mr-[12px] flex h-[28px] w-[205px] shrink-0 items-center ${active ? "z-10" : ""}`}>
      <svg className="absolute inset-0 h-[29px] w-[205px]" viewBox="0 0 205 29">
        <path d="M0 28.500L9.500 2Q10 .5 12 .5H190Q192 .5 193 2L204.500 28.500" fill={active ? "#f2f2f2" : "#d4d4d4"} stroke="#999" />
        {active ? <path d="M1 28.500h203" stroke="#f2f2f2" strokeWidth="1.500" /> : <path d="M0 28.500h205" stroke="#999" />}
      </svg>
      <span className="relative ml-[15px] flex w-[18px] justify-center">{icon}</span>
      <span className="relative ml-[5px] flex w-[134px] overflow-hidden text-black">
        {children}
        {fade && (
          <span className={`absolute top-0 right-0 h-full w-[34px] bg-linear-to-r from-transparent ${active ? "to-[#f2f2f2]" : "to-[#d4d4d4]"}`} />
        )}
      </span>
      <svg className="relative ml-[5px] h-2 w-2" viewBox="0 0 8 8">
        <path d="M0.500 0.500l7 7M7.500 0.500l-7 7" stroke="#555" strokeWidth="1.700" />
      </svg>
    </div>
  );
}

const octo: Record<string, [number, string]> = {
  mark: [16, "M8 0C3.58 0 0 3.58 0 8c0 3.54 2.29 6.53 5.47 7.59.4.07.55-.17.55-.38 0-.19-.01-.82-.01-1.49-2.01.37-2.53-.49-2.69-.94-.09-.23-.48-.94-.82-1.13-.28-.15-.68-.52-.01-.53.63-.01 1.08.58 1.23.82.72 1.21 1.87.87 2.33.66.07-.52.28-.87.51-1.07-1.78-.2-3.64-.89-3.64-3.95 0-.87.31-1.59.82-2.15-.08-.2-.36-1.02.08-2.12 0 0 .67-.21 2.2.82.64-.18 1.32-.27 2-.27.68 0 1.36.09 2 .27 1.53-1.04 2.2-.82 2.2-.82.44 1.1.16 1.92.08 2.12.51.56.82 1.27.82 2.15 0 3.07-1.87 3.75-3.65 3.95.29.25.54.73.54 1.48 0 1.07-.01 1.93-.01 2.2 0 .21.15.46.55.38A8.013 8.013 0 0 0 16 8c0-4.42-3.58-8-8-8z"],
  repo: [12, "M4 9H3V8h1v1zm0-3H3v1h1V6zm0-2H3v1h1V4zm0-2H3v1h1V2zm8-1v12c0 .55-.45 1-1 1H6v2l-1.500-1.500L3 16v-2H1c-.55 0-1-.45-1-1V1c0-.55.45-1 1-1h10c.55 0 1 .45 1 1zm-1 10H1v2h2v-1h3v1h5v-2zm0-10H2v9h9V1z"],
  code: [14, "M9.500 3L8 4.500 11.500 8 8 11.500 9.500 13 14 8 9.500 3zm-5 0L0 8l4.500 5L6 11.500 2.500 8 6 4.500 4.500 3z"],
  issue: [14, "M7 2.300c3.140 0 5.700 2.560 5.700 5.700s-2.560 5.700-5.700 5.700A5.710 5.710 0 0 1 1.300 8c0-3.140 2.560-5.700 5.700-5.700zM7 1C3.140 1 0 4.140 0 8s3.140 7 7 7 7-3.140 7-7-3.140-7-7-7zm1 3H6v5h2V4zm0 6H6v2h2v-2z"],
  pull: [12, "M11 11.28V5c-.03-.78-.34-1.47-.94-2.06C9.46 2.35 8.78 2.03 8 2H7V0L4 3l3 3V4h1c.27.02.48.11.69.31.21.2.3.42.31.69v6.28A1.993 1.993 0 0 0 10 15a1.993 1.993 0 0 0 1-3.72zm-1 2.92c-.66 0-1.2-.55-1.2-1.2 0-.65.55-1.2 1.2-1.2.65 0 1.2.55 1.2 1.2 0 .65-.55 1.2-1.2 1.2zM4 3c0-1.11-.89-2-2-2a1.993 1.993 0 0 0-1 3.72v6.56A1.993 1.993 0 0 0 2 15a1.993 1.993 0 0 0 1-3.72V4.72c.59-.34 1-.98 1-1.72zm-.8 10c0 .66-.55 1.2-1.2 1.2-.65 0-1.2-.55-1.2-1.2 0-.65.55-1.2 1.2-1.2.65 0 1.2.55 1.2 1.2zM2 4.2C1.34 4.2.8 3.65.8 3c0-.65.55-1.2 1.2-1.2.65 0 1.2.55 1.2 1.2 0 .65-.55 1.2-1.2 1.2z"],
  project: [15, "M10 12h3V2h-3v10zm-4-2h3V2H6v8zm-4 4h3V2H2v12zm-1 1h13V1H1v14zM14 0H1a1 1 0 0 0-1 1v14a1 1 0 0 0 1 1h13a1 1 0 0 0 1-1V1a1 1 0 0 0-1-1z"],
  book: [16, "M3 5h4v1H3V5zm0 3h4V7H3v1zm0 2h4V9H3v1zm11-5h-4v1h4V5zm0 2h-4v1h4V7zm0 2h-4v1h4V9zm2-6v9c0 .55-.45 1-1 1H9.500l-1 1-1-1H2c-.55 0-1-.45-1-1V3c0-.55.45-1 1-1h5.500l1 1 1-1H15c.55 0 1 .45 1 1zm-8 .5L7.500 3H2v9h6V3.500zm7-.5H9.500l-.5.5V12h6V3z"],
  graph: [16, "M16 14v1H0V0h1v14h15zM5 13H3V8h2v5zm4 0H7V3h2v10zm4 0h-2V6h2v7z"],
  gear: [14, "M14 8.77v-1.600l-1.940-.64-.45-1.090.88-1.840-1.130-1.130-1.810.91-1.090-.45-.69-1.920h-1.600l-.63 1.940-1.110.45-1.840-.88-1.130 1.130.91 1.810-.45 1.090L0 7.230v1.590l1.940.64.45 1.090-.88 1.840 1.130 1.130 1.810-.91 1.090.45.69 1.920h1.590l.63-1.940 1.110-.45 1.840.88 1.130-1.130-.92-1.810.47-1.090L14 8.750v.02zM7 11c-1.660 0-3-1.340-3-3s1.340-3 3-3 3 1.340 3 3-1.340 3-3 3z"],
  eye: [16, "M8.060 2C3 2 0 8 0 8s3 6 8.060 6C13 14 16 8 16 8s-3-6-7.940-6zM8 12c-2.200 0-4-1.780-4-4 0-2.200 1.800-4 4-4 2.220 0 4 1.800 4 4 0 2.220-1.780 4-4 4zm2-4c0 1.110-.89 2-2 2-1.110 0-2-.89-2-2 0-1.110.89-2 2-2 1.110 0 2 .89 2 2z"],
  star: [14, "M14 6l-4.900-.64L7 1 4.900 5.360 0 6l3.600 3.260L2.670 14 7 11.670 11.330 14l-.93-4.740L14 6z"],
  fork: [10, "M8 1a1.993 1.993 0 0 0-1 3.72V6L5 8 3 6V4.72A1.993 1.993 0 0 0 2 1a1.993 1.993 0 0 0-1 3.72V6.500l3 3v1.78A1.993 1.993 0 0 0 5 15a1.993 1.993 0 0 0 1-3.72V9.500l3-3V4.72A1.993 1.993 0 0 0 8 1zM2 4.2C1.34 4.2.8 3.65.8 3c0-.65.55-1.2 1.2-1.2.65 0 1.2.55 1.2 1.2 0 .65-.55 1.2-1.2 1.2zm3 10c-.66 0-1.2-.55-1.2-1.2 0-.65.55-1.2 1.2-1.2.65 0 1.2.55 1.2 1.2 0 .65-.55 1.2-1.2 1.2zm3-10c-.66 0-1.2-.55-1.2-1.2 0-.65.55-1.2 1.2-1.2.65 0 1.2.55 1.2 1.2 0 .65-.55 1.2-1.2 1.2z"],
  pencil: [14, "M0 12v3h3l8-8-3-3-8 8zm3 2H1v-2h1v1h1v1zm10.300-9.300L12 6 9 3l1.300-1.300a.996.996 0 0 1 1.410 0l1.590 1.590c.39.39.39 1.020 0 1.410z"],
  trash: [12, "M11 2H9c0-.55-.45-1-1-1H5c-.55 0-1 .45-1 1H2c-.55 0-1 .45-1 1v1c0 .55.45 1 1 1v9c0 .55.45 1 1 1h7c.55 0 1-.45 1-1V5c.55 0 1-.45 1-1V3c0-.55-.45-1-1-1zm-1 12H3V5h1v8h1V5h1v8h1V5h1v8h1V5h1v9zm1-10H2V3h9v1z"],
};

function Octicon({ name, size = 16, className = "" }: { name: string; size?: number; className?: string }) {
  const [w, d] = octo[name];
  return (
    <svg className={`shrink-0 ${className}`} width={(w * size) / 16} height={size} viewBox={`0 0 ${w} 16`} fill="currentColor">
      <path fillRule="evenodd" d={d} />
    </svg>
  );
}

function Caret({ className = "" }: { className?: string }) {
  return (
    <svg className={`h-[4px] w-[8px] shrink-0 ${className}`} viewBox="0 0 8 4">
      <path d="M0 0h8L4 4z" fill="currentColor" />
    </svg>
  );
}

function Avatar({ dark }: { dark: string }) {
  return (
    <svg className="h-5 w-5 shrink-0" viewBox="0 0 20 20" fill="none">
      <path d="M3.500 11a6 6 0 0 1 12 0M15.800 0v11" stroke={dark} strokeWidth="4" />
      <path d="M2.500 12.500a7 6 0 0 0 14 0" stroke="#f0843a" strokeWidth="3.600" />
    </svg>
  );
}

const btn = "flex h-[28px] items-center border border-[#c9ccd0] bg-linear-to-b from-[#fafbfc] to-[#eff3f6] text-[12px] font-bold text-[#24292e]";

function SocialButton({ icon, label, caret, className }: { icon: string; label: string; caret?: boolean; className: string }) {
  return (
    <div className="flex">
      <span className={`${btn} rounded-l-[3px] ${className}`}>
        <Octicon name={icon} className="mt-px mr-[3px]" />
        {label}
        {caret && <Caret className="ml-[4px]" />}
      </span>
      <span className="flex h-[28px] w-[29px] items-center justify-center rounded-r-[3px] border border-l-0 border-[#d1d5da] bg-white text-[12px] font-bold text-[#24292e]">0</span>
    </div>
  );
}

function RepoTab({ icon, label, count, className }: { icon: string; label: string; count?: boolean; className: string }) {
  return (
    <div className={`flex h-[40px] shrink-0 items-center text-[14px] text-[#586069] ${className}`}>
      <Octicon name={icon} className="mr-[4px] text-[#b4b9be]" />
      {label}
      {count && <span className="ml-[5px] flex h-[16px] w-[16px] items-center justify-center rounded-full bg-[#e6e8ea] text-[12px] font-bold text-[#444d56]">0</span>}
    </div>
  );
}

function Step({ n, children }: { n: number; children: React.ReactNode }) {
  return (
    <>
      <h2 className="mt-6 mb-4 border-b border-[#eaecef] pb-[7.200px] text-[24px] leading-[30px] font-bold">Passo #{n}</h2>
      <ul className="list-disc pl-8 text-[16px] leading-6">
        <li>{children}</li>
      </ul>
    </>
  );
}

function GitHub() {
  return (
    <div className="flex min-h-0 flex-1">
      <div className="flex min-w-0 flex-1 flex-col overflow-hidden bg-white font-['Liberation_Sans'] text-[#24292e]">
        <div className="flex h-[54px] shrink-0 justify-center bg-[#24292e]">
          <div className="flex w-[980px] items-center text-[14px] text-[#cdcfd1]">
            <Octicon name="mark" size={32} className="-ml-[2px] text-white" />
            <div className="ml-[15px] flex h-[30px] w-[301px] rounded-[3px] bg-[#404448]">
              <span className="flex w-[103px] items-center border-r border-[#24292e] pl-[9px]">
                <Fit className="w-[85px]">This repository</Fit>
              </span>
              <span className="flex items-center pl-[8px] text-[#85888c]">
                <Fit className="w-[42px]">Search</Fit>
              </span>
            </div>
            <span className="ml-[15px] font-bold"><Fit className="w-[88px]">Pull requests</Fit></span>
            <span className="ml-[16px] font-bold"><Fit className="w-[43px]">Issues</Fit></span>
            <span className="ml-[17px] font-bold"><Fit className="w-[80px]">Marketplace</Fit></span>
            <span className="ml-[16px] font-bold"><Fit className="w-[51px]">Explore</Fit></span>
            <svg className="mt-[4px] ml-auto h-[12px] w-[12px]" viewBox="0 0 12 12">
              <path d="M0 6h12M6 0v12" stroke="#cdcfd1" strokeWidth="1.800" />
            </svg>
            <Caret className="ml-[7px]" />
            <span className="ml-[17px] flex"><Avatar dark="#35383b" /></span>
            <Caret className="ml-[4px] mr-[1px]" />
          </div>
        </div>
        <div className="flex h-[104px] shrink-0 justify-center border-b border-[#e1e4e8] bg-[#fafbfc]">
          <div className="flex w-[980px] flex-col">
            <div className="mt-[20px] flex h-[28px] items-center text-[18px] text-[#0366d6]">
              <Octicon name="repo" className="mr-[6px] text-[#a3a8ad]" />
              <span>demaCODE</span>
              <span className="mx-[5px] text-[#586069]">/</span>
              <span className="font-bold">demacode.github.io</span>
              <div className="ml-auto flex gap-[10px]">
                <SocialButton icon="eye" label="Watch" caret className="w-[87px] pl-[10px]" />
                <SocialButton icon="star" label="Star" className="w-[61px] pl-[10px]" />
                <SocialButton icon="fork" label="Fork" className="w-[60px] pl-[10px]" />
              </div>
            </div>
            <div className="mt-[16px] flex h-[40px]">
              <div className="-mb-px flex h-[40px] w-[83px] shrink-0 items-center rounded-t-[3px] border-x border-t-[3px] border-x-[#e1e4e8] border-t-[#e36209] bg-white pb-[3px] pl-[15px] text-[14px]">
                <Octicon name="code" className="mr-[4px]" />
                Code
              </div>
              <RepoTab icon="issue" label="Issues" count className="ml-[16px] w-[111px]" />
              <RepoTab icon="pull" label="Pull requests" count className="w-[150px]" />
              <RepoTab icon="project" label="Projects" count className="w-[122px]" />
              <RepoTab icon="book" label="Wiki" className="w-[78px]" />
              <RepoTab icon="graph" label="Insights" className="w-[100px]" />
              <RepoTab icon="gear" label="Settings" className="" />
            </div>
          </div>
        </div>
        <div className="flex flex-1 justify-center">
          <div className="flex w-[980px] flex-col">
            <div className="mt-[20px] flex h-[28px] shrink-0 items-center">
              <span className={`${btn} w-[117px] rounded-[3px] pl-[10px]`}>
                <span className="mr-[4px] font-normal text-[#959da5]">Branch:</span>master
                <Caret className="ml-[4px]" />
              </span>
              <span className="ml-[12px] pb-[2px] text-[16px] font-bold text-[#0366d6]">demacode.github.io</span>
              <span className="mx-[4px] pb-[2px] text-[16px] text-[#586069]">/</span>
              <span className="pb-[2px] text-[16px] font-bold">README.md</span>
              <span className={`${btn} ml-auto rounded-l-[3px] px-[10px]`}>Find file</span>
              <span className={`${btn} rounded-r-[3px] border-l-0 px-[10px]`}>Copy path</span>
            </div>
            <div className="mt-[10px] flex h-[42px] shrink-0 items-center rounded-t-[3px] border border-[#c8e1ff] bg-[#f1f8ff] px-[10px] text-[13px] text-[#586069]">
              <Avatar dark="#333" />
              <span className="ml-[3px] font-bold text-[#24292e]">demaCODE</span>
              <span className="ml-[4px]">Update README.md</span>
              <span className="mt-px ml-auto font-['Liberation_Mono'] text-[12px]">230a1a5</span>
              <span className="ml-[4px]">27 seconds ago</span>
            </div>
            <div className="flex h-[31px] shrink-0 items-center border border-t-0 border-[#c8e1ff] px-[10px] text-[13px] text-[#586069]">
              <b className="text-[#24292e]">1</b>&nbsp;contributor
            </div>
            <div className="mt-[15px] flex h-[44px] shrink-0 items-center rounded-t-[3px] border border-[#dcdfe3] bg-[#fafbfc] px-[10px] font-['Liberation_Mono'] text-[12px]">
              <span>30 lines (15 sloc)</span>
              <span className="mx-[10px] h-[18px] w-px bg-[#dddfe2]" />
              <span>707 Bytes</span>
              <div className="ml-auto flex items-center font-['Liberation_Sans']">
                <span className={`${btn} rounded-l-[3px] px-[10px]`}>Raw</span>
                <span className={`${btn} border-l-0 px-[10px]`}>Blame</span>
                <span className={`${btn} rounded-r-[3px] border-l-0 px-[10px]`}>History</span>
                <Octicon name="pencil" className="ml-[14px] text-[#586069]" />
                <Octicon name="trash" className="ml-[19px] mr-[5px] text-[#586069]" />
              </div>
            </div>
            <div className="flex-1 border-x border-[#dcdfe3] px-[45px] pt-[45px]">
              <h1 className="border-b border-[#eaecef] pb-[9.600px] text-[32px] leading-[40px] font-bold">Converter arquivo de notas fiscais .txt para .xls</h1>
              <div className="my-6 h-[4px] bg-[#e1e4e8]" />
              <Step n={1}>Abra o excel com uma planilha vazia.</Step>
              <Step n={2}>Clique em abrir no menu superior do excel.</Step>
              <Step n={3}>Escolha o arquivo com as notas que esta em arquivo de texto.</Step>
              <Step n={4}>Abrirá uma janela com varias opções. Selecione a coluna "CHAVE NFE", marque a mesma como texto e clique em OK.</Step>
              <Step n={5}>
                Agora é só salvar em formato .xls no local aonde desejar e seu arquivo já está pronto para ser utilizado no <b>RNXDirect</b>.
              </Step>
            </div>
          </div>
        </div>
      </div>
      <div className="flex w-[15px] shrink-0 flex-col items-center bg-[#f1f1f1] text-[#8d8d8d]">
        <Caret className="mt-[6px] rotate-180" />
        <span className="mt-[5px] h-[714px] w-[11px] bg-[#c1c1c1]" />
        <Caret className="mt-auto mb-[6px]" />
      </div>
    </div>
  );
}

function WinButton({ children }: { children: React.ReactNode }) {
  return (
    <span className="flex h-[20px] w-[24px] items-center justify-center rounded-[2px] border border-[#a8a8a8] bg-[#cfcfcf]">
      <svg className="h-[12px] w-[12px]" viewBox="0 0 12 12" fill="none" stroke="#777" strokeWidth="1">
        {children}
      </svg>
    </span>
  );
}

function Browser() {
  return (
    <div className="flex min-w-0 flex-1 flex-col font-['Noto_Sans']">
      <div className="flex h-[29px] shrink-0 border-b border-[#999] bg-[#cccccc] pl-[7px] text-[15px]">
        <BrowserTab
          fade
          icon={
            <span className="flex h-4 w-4 items-center justify-center rounded-[3px] bg-[#563d7c] font-['Liberation_Sans'] text-[13px] font-bold text-white">B</span>
          }
        >
          <Fit className="w-[174px]">Documentation · Bootstrap</Fit>
        </BrowserTab>
        <BrowserTab
          icon={
            <svg className="mr-[2px] h-[14px] w-[11px]" viewBox="0 0 11 14">
              <path d="M1 1h5.500L10 4.500V13H1zM6.500 1v3.500H10" fill="none" stroke="#555" strokeWidth="1.300" />
            </svg>
          }
        >
          <Fit className="w-[74px]">RNX Direct</Fit>
        </BrowserTab>
        <BrowserTab active fade icon={<Octicon name="mark" />}>
          <Fit className="w-[138px]">demacode.github.io</Fit>
        </BrowserTab>
        <BrowserTab
          fade
          icon={
            <svg className="h-4 w-4" viewBox="0 0 16 16">
              <circle cx="10" cy="8" r="5" fill="none" stroke="#e0a060" strokeWidth="3" strokeDasharray="2 1.500" />
              <rect x="1" y="0" width="10" height="16" rx="1" fill="#49666e" />
              <text x="6" y="11" fontSize="8" textAnchor="middle" fontFamily="Liberation Sans" fontWeight="bold" fill="#dfe">
                M
              </text>
            </svg>
          }
        >
          <Fit className="w-[148px]">demaCODE - Software</Fit>
        </BrowserTab>
        <svg className="mt-[7px] ml-[10px] h-[18px] w-[36px]" viewBox="0 0 36 18">
          <path d="M2 .5h24q2 0 3 2l5 13q0 2-2 2H9q-2 0-3-2L1 2.500Q.5.5 2 .5z" fill="#d4d4d4" stroke="#999" />
        </svg>
        <div className="ml-auto flex gap-[2px] pt-[2px] pr-[3px]">
          <span className="mr-[5px] flex h-[18px] w-[48px] items-center justify-center rounded-b-[4px] border border-t-0 border-[#999] bg-[#c4c4c4] text-[13px] text-white [text-shadow:1px_0_0_#555,-1px_0_0_#555,0_1px_0_#555,0_-1px_0_#555]">
            <Fit className="w-[32px]">Artur</Fit>
          </span>
          <WinButton>
            <rect x="1" y="7" width="10" height="3" fill="#fff" />
          </WinButton>
          <WinButton>
            <rect x="4" y="1" width="7" height="7" fill="#fff" />
            <rect x="1" y="4" width="6" height="6" fill="#fff" />
          </WinButton>
          <WinButton>
            <path d="M1 1h3l2 3 2-3h3L7.500 6 11 11H8L6 8l-2 3H1l3.500-5z" fill="#fff" />
          </WinButton>
        </div>
      </div>
      <div className="flex h-[37px] shrink-0 items-center border-b border-[#b6b4b6] bg-[#f2f2f2]">
        <svg className="ml-[10px] h-[18px] w-[100px] shrink-0" viewBox="0 0 100 18" fill="none" stroke="#555" strokeWidth="2">
          <path d="M15 9H2M8 2.500L1.500 9 8 15.500" />
          <path d="M29 9h13M36 2.500L42.500 9 36 15.500" />
          <path d="M69 5a6 6 0 1 0 1.500 5" />
          <path d="M71 1.500v6h-6z" fill="#555" stroke="none" />
          <path d="M85 9.500L92 3l7 6.500M87.500 8.500V16h9V8.500" />
        </svg>
        <div className="ml-[10px] flex h-[28px] w-[1615px] shrink-0 items-center rounded-[3px] border border-[#a9a9a9] bg-white text-[15px]">
          <svg className="ml-[9px] h-[12px] w-[8px]" viewBox="0 0 8 12">
            <path d="M1.500 6V3.500a2.500 2.500 0 0 1 5 0V6" fill="none" stroke="#0b8043" strokeWidth="1.500" />
            <rect x="0" y="5" width="8" height="7" rx="1" fill="#0b8043" />
          </svg>
          <Fit className="ml-[9px] w-[44px] text-[#0b8043]">Seguro</Fit>
          <span className="ml-[9px] h-[16px] w-px bg-[#b0b0b0]" />
          <Fit className="ml-[8px] w-[494px] text-[#808080]">
            <span className="text-[#0b8043]">https</span>://<span className="text-black">github.com</span>/demaCODE/demacode.github.io/blob/master/README.md
          </Fit>
          <svg className="mr-[5px] ml-auto h-4 w-4" viewBox="0 0 16 16">
            <path d="M8 1.800l1.900 4.200 4.600.5-3.400 3.100.9 4.500-4-2.300-4 2.300.9-4.500L1.500 6.500l4.600-.5z" fill="none" stroke="#555" strokeWidth="1.500" />
          </svg>
        </div>
        <svg className="ml-[10px] h-4 w-4" viewBox="0 0 16 16">
          <ellipse cx="8" cy="8" rx="5.500" ry="6" fill="none" stroke="#dedede" strokeWidth="3.600" />
          <path d="M8 2a5.500 6 0 0 1 0 12" fill="none" stroke="#cdcdcd" strokeWidth="2.600" />
        </svg>
        <svg className="ml-4 h-4 w-4" viewBox="0 0 16 16">
          <path d="M1 15l1-4 6-6 3 3-6 6z" fill="#9fb4e8" stroke="#667" />
          <path d="M7 4l1.500-1L13 7.500 12 9zM10 4q2-5 5-3 2 2-2 6z" fill="#333" />
          <path d="M1 15l1-4 3-1-1 4z" fill="#2a53d0" />
        </svg>
        <svg className="ml-4 h-4 w-4" viewBox="0 0 16 16" fill="none" stroke="#444" strokeWidth="1.800">
          <path d="M6 2.500Q1.500 4 1.500 8q0 3 2.500 5M10 13.500q4.500-1.500 4.500-5.500 0-3-2.500-5" />
          <path d="M3 1h4v4M13 15H9v-4" />
          <circle cx="8" cy="8" r="2" />
        </svg>
        <svg className="ml-4 h-4 w-4" viewBox="0 0 16 16" fill="#555">
          <circle cx="8" cy="2.500" r="1.700" />
          <circle cx="8" cy="8" r="1.700" />
          <circle cx="8" cy="13.500" r="1.700" />
        </svg>
      </div>
      <GitHub />
    </div>
  );
}

const panel = "flex h-6 shrink-0 items-center bg-linear-to-b from-[#5d5b50] to-[#3d3c37] text-[14.500px] text-[#dfdbd2]";

export default function App() {
  return (
    <div className="flex h-[1080px] w-[3286px] overflow-hidden bg-black font-['Noto_Sans'] leading-none">
      <div className="flex h-[768px] w-[1366px] shrink-0 flex-col">
        <div className={panel}>
          <PanelButtons active={false} />
          <div className="ml-[10px] flex gap-[12px] text-[#b0ada4]">
            <Fit className="w-[109px]">LibreOffice Calc</Fit>
            <Fit className="w-[55px]">Arquivo</Fit>
            <Fit className="w-[42px]">Editar</Fit>
            <Fit className="w-[41px]">Exibir</Fit>
            <Fit className="w-[43px]">Inserir</Fit>
            <Fit className="w-[64px]">Formatar</Fit>
            <Fit className="w-[55px]">Planilha</Fit>
            <Fit className="w-[44px]">Dados</Fit>
            <Fit className="w-[87px]">Ferramentas</Fit>
            <Fit className="w-[45px]">Janela</Fit>
            <Fit className="w-[39px]">Ajuda</Fit>
          </div>
          <Indicators />
        </div>
        <div className="flex min-h-0 flex-1">
          <Launcher tall={false} />
          <Calc />
        </div>
      </div>
      <div className="flex h-[1080px] w-[1920px] shrink-0 flex-col">
        <div className={panel}>
          <PanelButtons active />
          <div className="ml-[10px] flex gap-[12px]">
            <Fit className="w-[55px]">Arquivo</Fit>
            <Fit className="w-[42px]">Editar</Fit>
            <Fit className="w-[67px]">Visualizar</Fit>
            <Fit className="w-[63px]">Histórico</Fit>
            <Fit className="w-[87px]">Ferramentas</Fit>
            <Fit className="w-[55px]">Pessoas</Fit>
            <Fit className="w-[40px]">Ajuda</Fit>
          </div>
          <Indicators />
        </div>
        <div className="flex min-h-0 flex-1">
          <Launcher tall />
          <Browser />
        </div>
      </div>
    </div>
  );
}
